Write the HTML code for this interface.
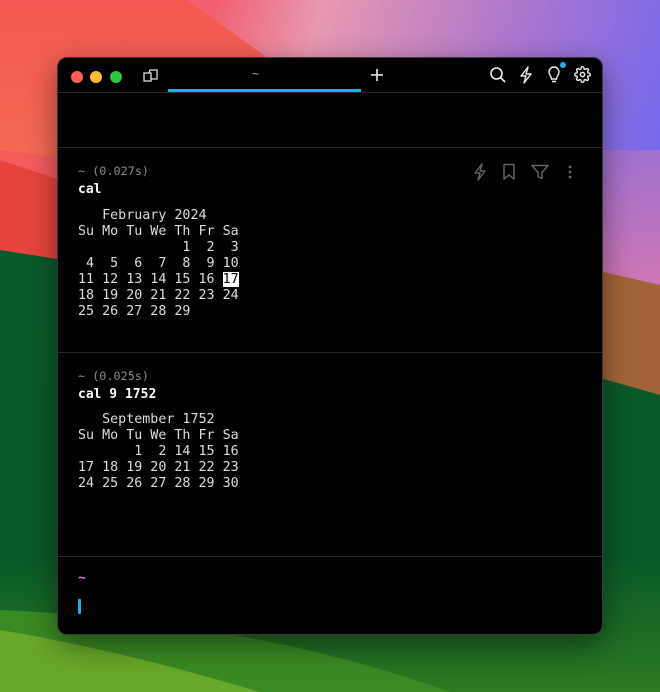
<!DOCTYPE html>
<html><head><meta charset="utf-8"><style>
html,body{margin:0;padding:0;width:660px;height:692px;overflow:hidden;background:#0a5a2a;}
#bg{position:absolute;left:0;top:0}
.win{position:absolute;left:57px;top:57px;width:546px;height:578px;background:#000;border-radius:10px;border:1px solid #3a3a3a;box-sizing:border-box;overflow:hidden;box-shadow:0 10px 30px rgba(0,0,0,.45);}
.hr{position:absolute;left:0;right:0;height:1px;background:#262626}
.m{position:absolute;font-family:"DejaVu Sans Mono","Liberation Mono",monospace;font-size:13.35px;line-height:16px;color:#ddd;white-space:pre;margin:0}
.meta{position:absolute;font-family:"DejaVu Sans Mono","Liberation Mono",monospace;font-size:11.8px;color:#8a8a8a;white-space:pre}
.cmd{position:absolute;font-family:"DejaVu Sans Mono","Liberation Mono",monospace;font-size:13px;font-weight:bold;color:#fff;white-space:pre}
.hl{background:#fff;color:#000}
.dot{position:absolute;top:13px;width:12px;height:12px;border-radius:50%}
svg.i{position:absolute}
</style></head><body>
<svg id="bg" width="660" height="692" viewBox="0 0 660 692">
<defs>
<linearGradient id="top" x1="0" y1="0" x2="1" y2="0.3"><stop offset="0" stop-color="#f45a52"/><stop offset="0.3" stop-color="#f26070"/><stop offset="0.45" stop-color="#e898b0"/><stop offset="0.75" stop-color="#a874d0"/><stop offset="1" stop-color="#7068f0"/></linearGradient>
<linearGradient id="pk" x1="0" y1="0" x2="0" y2="1"><stop offset="0" stop-color="#a070d0"/><stop offset="1" stop-color="#d878b0"/></linearGradient>
<linearGradient id="grn" x1="0" y1="0" x2="0" y2="1"><stop offset="0" stop-color="#0a5a2a"/><stop offset="0.7" stop-color="#0a5a28"/><stop offset="1" stop-color="#2c7a22"/></linearGradient>
<linearGradient id="lt" x1="0" y1="0" x2="0" y2="1"><stop offset="0" stop-color="#f35850"/><stop offset="1" stop-color="#f46a55"/></linearGradient>
</defs>
<rect width="660" height="692" fill="url(#top)"/>
<path d="M430 150 L660 150 L660 310 L430 260Z" fill="url(#pk)"/>
<path d="M0 0 L185 0 Q230 30 270 60 L120 165 L0 150Z" fill="url(#lt)"/>
<path d="M0 160 L300 260 L300 420 L0 260Z" fill="#e8443e"/>
<path d="M250 190 L660 285 L660 400 L250 320Z" fill="#a4643a"/>
<path d="M0 250 Q330 300 660 395 L660 692 L0 692Z" fill="url(#grn)"/>
<path d="M0 610 Q250 620 450 692 L0 692Z" fill="#3a8a24"/>
<path d="M0 630 Q120 650 260 692 L0 692Z" fill="#68a82a"/>
</svg>
<div class="win">
  <div class="dot" style="left:13px;background:#fe5f57"></div>
  <div class="dot" style="left:32px;background:#febc2e"></div>
  <div class="dot" style="left:52px;background:#28c840"></div>
  <svg class="i" style="left:85px;top:10px" width="16" height="16" viewBox="0 0 16 16" fill="none" stroke="#ddd" stroke-width="1.3"><rect x="1" y="5" width="7" height="8"/><path d="M6 5 L7 2 H14 V11 H8"/></svg>
  <div style="position:absolute;left:194px;top:9px;color:#bbb;font:12px 'Liberation Sans',sans-serif">~</div>
  <div style="position:absolute;left:110px;top:31px;width:193px;height:3px;background:#1ab0e8"></div>
  <svg class="i" style="left:312px;top:10px" width="14" height="14" viewBox="0 0 14 14" stroke="#eee" stroke-width="1.6"><path d="M7 1V13M1 7H13"/></svg>
  <svg class="i" style="left:431px;top:8px" width="18" height="18" viewBox="0 0 18 18" fill="none" stroke="#eee" stroke-width="1.6"><circle cx="7.5" cy="7.5" r="5.5"/><path d="M11.5 11.5L16 16"/></svg>
  <svg class="i" style="left:460px;top:8px" width="16" height="18" viewBox="0 0 16 18" fill="none" stroke="#eee" stroke-width="1.4" stroke-linejoin="round"><path d="M10 1L3 10H8L6 17L13 8H8Z"/></svg>
  <svg class="i" style="left:489px;top:8px" width="14" height="18" viewBox="0 0 14 18" fill="none" stroke="#eee" stroke-width="1.4"><path d="M4.5 13C4.5 10 2 9 2 6a5 5 0 0 1 10 0c0 3-2.5 4-2.5 7Z"/><path d="M5 15.5H9"/></svg>
  <div style="position:absolute;left:502px;top:4px;width:6px;height:6px;border-radius:50%;background:#1ab0e8"></div>
  <svg class="i" style="left:516px;top:8px" width="17" height="17" viewBox="0 0 24 24" fill="none" stroke="#eee" stroke-width="2"><circle cx="12" cy="12" r="3"/><path d="M19.4 15a1.650 1.650 0 0 0 .33 1.820l.06.06a2 2 0 1 1-2.830 2.830l-.06-.06a1.650 1.650 0 0 0-1.820-.33 1.650 1.650 0 0 0-1 1.510V21a2 2 0 1 1-4 0v-.09A1.650 1.650 0 0 0 9 19.4a1.650 1.650 0 0 0-1.820.33l-.06.06a2 2 0 1 1-2.830-2.830l.06-.06A1.650 1.650 0 0 0 4.6 15a1.650 1.650 0 0 0-1.510-1H3a2 2 0 1 1 0-4h.09A1.650 1.650 0 0 0 4.6 9a1.650 1.650 0 0 0-.33-1.820l-.06-.06a2 2 0 1 1 2.830-2.830l.06.06A1.650 1.650 0 0 0 9 4.6a1.650 1.650 0 0 0 1-1.510V3a2 2 0 1 1 4 0v.09a1.650 1.650 0 0 0 1 1.510 1.650 1.650 0 0 0 1.820-.33l.06-.06a2 2 0 1 1 2.830 2.830l-.06.06A1.650 1.650 0 0 0 19.4 9a1.650 1.650 0 0 0 1.510 1H21a2 2 0 1 1 0 4h-.09a1.650 1.650 0 0 0-1.510 1z"/></svg>
  <div class="hr" style="top:34px"></div>
  <div class="hr" style="top:89px"></div>

  <div class="meta" style="left:20px;top:106px">~ (0.027s)</div>
  <div class="cmd" style="left:20px;top:124px">cal</div>
  <svg class="i" style="left:414px;top:105px" width="16" height="18" viewBox="0 0 16 18" fill="none" stroke="#666" stroke-width="1.4" stroke-linejoin="round"><path d="M10 1L3 10H8L6 17L13 8H8Z"/></svg>
  <svg class="i" style="left:444px;top:105px" width="14" height="18" viewBox="0 0 14 18" fill="none" stroke="#666" stroke-width="1.4" stroke-linejoin="round"><path d="M2 1.5H12V16L7 12L2 16Z"/></svg>
  <svg class="i" style="left:473px;top:106px" width="18" height="16" viewBox="0 0 18 16" fill="none" stroke="#666" stroke-width="1.4" stroke-linejoin="round"><path d="M1 1.5H17L11 8.5V14.5L7 12.5V8.5Z"/></svg>
  <svg class="i" style="left:509px;top:106px" width="6" height="16" viewBox="0 0 6 16" fill="#666"><circle cx="3" cy="3" r="1.4"/><circle cx="3" cy="8" r="1.4"/><circle cx="3" cy="13" r="1.4"/></svg>
<pre class="m" style="left:20px;top:150px">   February 2024
Su Mo Tu We Th Fr Sa
             1  2  3
 4  5  6  7  8  9 10
11 12 13 14 15 16 <span class="hl">17</span>
18 19 20 21 22 23 24
25 26 27 28 29</pre>
  <div class="hr" style="top:294px"></div>

  <div class="meta" style="left:20px;top:311px">~ (0.025s)</div>
  <div class="cmd" style="left:20px;top:329px">cal 9 1752</div>
<pre class="m" style="left:20px;top:354px">   September 1752
Su Mo Tu We Th Fr Sa
       1  2 14 15 16
17 18 19 20 21 22 23
24 25 26 27 28 29 30</pre>
  <div class="hr" style="top:498px"></div>
  <div style="position:absolute;left:20px;top:513px;color:#e070e0;font:bold 13px 'DejaVu Sans Mono',monospace">~</div>
  <div style="position:absolute;left:20px;top:541px;width:3px;height:15px;background:#1ab0e8;border-radius:1px"></div>
</div>
</body></html>
